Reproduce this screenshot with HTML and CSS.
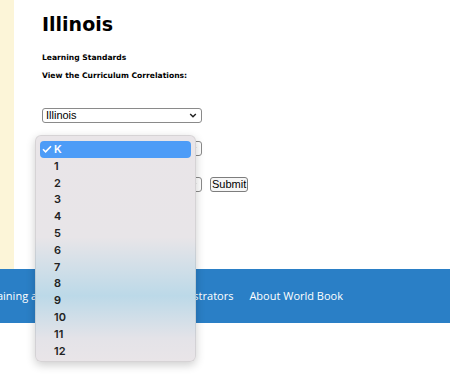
FILE: index.html
```html
<!DOCTYPE html>
<html lang="en">
<head>
    <meta charset="UTF-8">
    <meta name="viewport" content="width=device-width, initial-scale=1.0">
    <title>Illinois - Learning Standards</title>
    <link rel="stylesheet" href="styles.css">
</head>
<body>
    <div class="page">
        <div class="sidebar"></div>
        <div class="content">
            <h1>Illinois</h1>
            <p class="label first">Learning Standards</p>
            <p class="label">View the Curriculum Correlations:</p>

            <form class="correlations">
                <div class="select-wrap state">
                    <select id="state">
                        <option>Illinois</option>
                    </select>
                    <svg class="chevron" viewBox="0 0 10 6"><path d="M1.5 1.2 5 4.6 8.5 1.2"/></svg>
                </div>
                <div class="select-wrap grade">
                    <select id="grade">
                        <option>K</option>
                    </select>
                    <svg class="chevron" viewBox="0 0 10 6"><path d="M1.5 1.2 5 4.6 8.5 1.2"/></svg>
                </div>
                <div class="row">
                    <div class="select-wrap">
                        <select id="product">
                            <option>Select a product</option>
                        </select>
                        <svg class="chevron" viewBox="0 0 10 6"><path d="M1.5 1.2 5 4.6 8.5 1.2"/></svg>
                    </div>
                    <button type="button" class="submit">Submit</button>
                </div>
            </form>
        </div>
    </div>

    <footer class="site-footer">
        <nav class="footer-nav">
            <a href="#">Training and Resources</a>
            <a href="#">For All Administrators</a>
            <a href="#">About World Book</a>
        </nav>
    </footer>

    <!-- open grade dropdown -->
    <ul class="dropdown">
        <li class="selected">
            <svg class="check" viewBox="0 0 10 8"><path d="M1 4.2 3.6 6.8 9 1.2"/></svg>K
        </li>
        <li>1</li>
        <li>2</li>
        <li>3</li>
        <li>4</li>
        <li>5</li>
        <li>6</li>
        <li>7</li>
        <li>8</li>
        <li>9</li>
        <li>10</li>
        <li>11</li>
        <li>12</li>
    </ul>
</body>
</html>
```

FILE: styles.css
```css
body {
    margin: 0;
    min-height: 377px;
    background: #fff;
    font-family: "DejaVu Sans", Verdana, sans-serif;
    color: #000;
    position: relative;
}
.page {
    display: flex;
    height: 269px;
}
.sidebar {
    width: 14px;
    background-color: #fcf5d8;
}
.content {
    flex: 1;
    padding-left: 28px;
}
h1 {
    font-size: 19px;
    line-height: 24px;
    margin: 12px 0 0;
    font-weight: bold;
}
.label {
    font-size: 7.6px;
    line-height: 12px;
    font-weight: bold;
    margin: 6px 0 0;
}
.label.first {
    margin-top: 16px;
}
.correlations {
    margin: 26px 0 0;
}
.select-wrap {
    position: relative;
    width: 160px;
    height: 15px;
}
.select-wrap select {
    display: block;
    -webkit-appearance: none;
    appearance: none;
    width: 100%;
    height: 15px;
    box-sizing: border-box;
    margin: 0;
    padding: 0 0 0 3px;
    border: 1px solid #8a8a8a;
    border-radius: 3px;
    background: #fff;
    font-family: "Liberation Sans", Arial, sans-serif;
    font-size: 11px;
    line-height: 13px;
    color: #000;
}
.chevron {
    position: absolute;
    right: 5px;
    top: 5px;
    width: 8px;
    height: 5px;
    fill: none;
    stroke: #222;
    stroke-width: 1.8;
}
.grade {
    margin-top: 18px;
}
.row {
    display: flex;
    align-items: center;
    gap: 8px;
    margin-top: 21px;
}
.submit {
    height: 15px;
    padding: 0 1px;
    border: 1px solid #7d7d7d;
    border-radius: 3px;
    background: #f6f6f6;
    font-family: "Liberation Sans", Arial, sans-serif;
    font-size: 11px;
    line-height: 13px;
    color: #000;
}
.site-footer {
    height: 54px;
    background-color: #2a7fc6;
    display: flex;
    align-items: center;
    overflow: hidden;
}
.footer-nav {
    flex: 1;
    min-width: 0;
    display: flex;
    justify-content: flex-end;
    gap: 16px;
    padding-right: 107px;
    white-space: nowrap;
}
.footer-nav a {
    flex-shrink: 0;
    color: #fff;
    text-decoration: none;
    font-family: "Open Sans", sans-serif;
    font-size: 11px;
    line-height: 16px;
}

/* native popup of the grade select */
.dropdown {
    position: absolute;
    left: 35px;
    top: 135px;
    width: 161px;
    height: 227px;
    box-sizing: border-box;
    margin: 0;
    padding: 5px 4px 0;
    list-style: none;
    border-radius: 6px;
    border: 1px solid rgba(0, 0, 0, 0.08);
    background: linear-gradient(to bottom, #e9e5e8 0%, #e8e5e8 45%, #bcd9e8 71%, #e4e3e8 90%, #e9e5e8 100%);
    box-shadow: 0 3px 10px rgba(0, 0, 0, 0.2);
    font-family: Inter, "Liberation Sans", sans-serif;
    font-size: 11px;
    font-weight: 600;
    color: #222;
}
.dropdown li {
    height: 16.8px;
    line-height: 16.8px;
    padding-left: 14px;
    border-radius: 4px;
}
.dropdown li.selected {
    position: relative;
    background-color: #4d9cf7;
    color: #fff;
}
.check {
    position: absolute;
    left: 2px;
    top: 4px;
    width: 10px;
    height: 8px;
    fill: none;
    stroke: #fff;
    stroke-width: 1.6;
}
```
